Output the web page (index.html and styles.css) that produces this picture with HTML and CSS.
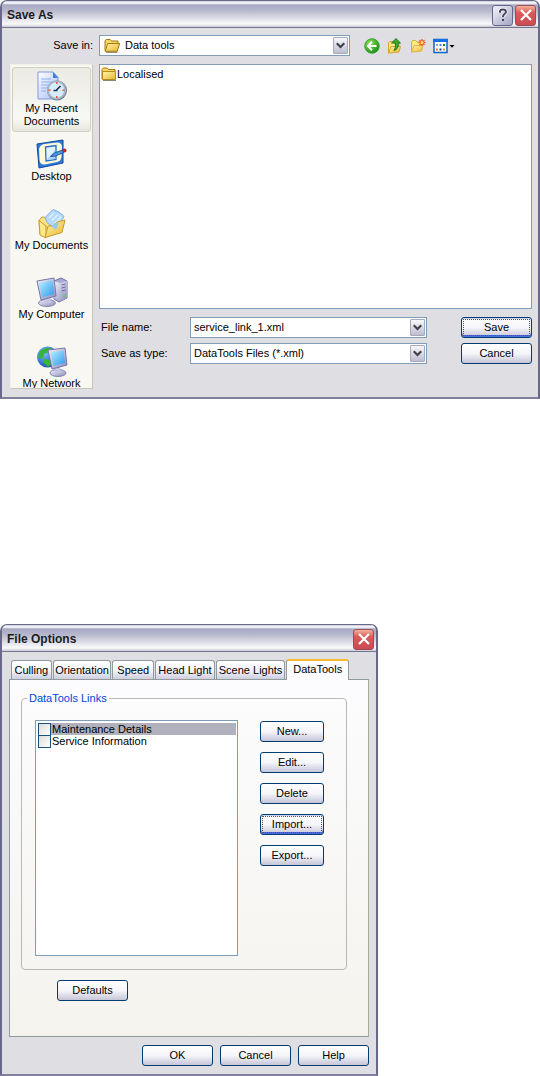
FILE: index.html
```html
<!DOCTYPE html>
<html lang="en">
<head>
    <meta charset="UTF-8">
    <meta name="viewport" content="width=device-width, initial-scale=1.0">
    <title>Data tools</title>
    <link rel="stylesheet" href="styles.css">
</head>
<body>
    <!-- shared icons -->
    <svg class="defs" aria-hidden="true">
        <defs>
            <linearGradient id="gold" x1="0" y1="0" x2="1" y2="1">
                <stop offset="0" stop-color="#fff6a8"/><stop offset="1" stop-color="#e9b52f"/>
            </linearGradient>
            <linearGradient id="sky" x1="0" y1="0" x2="1" y2="1">
                <stop offset="0" stop-color="#b9f0ff"/><stop offset="1" stop-color="#2d98ee"/>
            </linearGradient>
            <linearGradient id="paper" x1="0" y1="0" x2="1" y2="1">
                <stop offset="0" stop-color="#ffffff"/><stop offset="1" stop-color="#a9bdf5"/>
            </linearGradient>
            <linearGradient id="metal" x1="0" y1="0" x2="1" y2="1">
                <stop offset="0" stop-color="#f1f1fb"/><stop offset="1" stop-color="#8c8cbd"/>
            </linearGradient>
            <radialGradient id="green" cx="0.35" cy="0.3" r="0.8">
                <stop offset="0" stop-color="#8be05c"/><stop offset="1" stop-color="#148a10"/>
            </radialGradient>
            <radialGradient id="globe" cx="0.35" cy="0.3" r="0.8">
                <stop offset="0" stop-color="#7cc4ff"/><stop offset="1" stop-color="#1042ae"/>
            </radialGradient>
        </defs>
        <symbol id="chevron" viewBox="0 0 9 7">
            <path d="M0.7 1.2 4.5 5l3.8-3.8" fill="none" stroke="#3e4048" stroke-width="2.2"/>
        </symbol>
        <symbol id="cross" viewBox="0 0 12 12">
            <path d="M1 1l10 10M11 1L1 11" fill="none" stroke="#fff" stroke-width="2.2"/>
        </symbol>
    </svg>

    <div class="window save-window">
        <div class="titlebar">
            <h1>Save As</h1>
            <button class="title-btn help-btn" aria-label="Help">
                <svg width="12" height="14" viewBox="0 0 12 14"><path d="M3 4.8V3.2Q3.4 1.5 6 1.5T9 3.8Q9 5.3 7.4 6.2 6 7 6 9" fill="none" stroke="#fff" stroke-width="3.4"/><path d="M3 4.8V3.2Q3.4 1.5 6 1.5T9 3.8Q9 5.3 7.4 6.2 6 7 6 9" fill="none" stroke="#444460" stroke-width="2"/><path d="M5 11h2v2H5z" fill="#444460"/></svg>
            </button>
            <button class="title-btn close-btn" aria-label="Close"><svg width="12" height="12"><use href="#cross"/></svg></button>
        </div>

        <div class="save-body">
            <label class="look-label" for="look">Save in:</label>
            <div class="look-row">
                <div class="combo look-combo">
                    <svg class="folder-open" width="16" height="15" viewBox="0 0 16 15">
                        <path d="M1 12.5V3l1.2-1.5h4L7.5 3H14v2.5" fill="#f7d765" stroke="#a17a0c"/>
                        <path d="M1.2 13.3 3.7 5.5h12l-2.5 7.8z" fill="url(#gold)" stroke="#a17a0c"/>
                        <path d="M2 14.4h11.6" stroke="#8c856c"/>
                    </svg>
                    <select id="look"><option>Data tools</option></select>
                    <span class="arrow"><svg width="9" height="7"><use href="#chevron"/></svg></span>
                </div>
                <button class="tool" aria-label="Back">
                    <svg width="16" height="16" viewBox="0 0 16 16"><circle cx="8" cy="8" r="7.3" fill="url(#green)" stroke="#2a9a20" stroke-width="0.8"/><path d="M8 3.8 3.9 8 8 12.2M4.5 8h8" fill="none" stroke="#fff" stroke-width="2"/></svg>
                </button>
                <button class="tool" aria-label="Up one level">
                    <svg width="16" height="16" viewBox="0 0 16 16"><path d="M1.5 15V5l1-1.5h3L7 5h5v3" fill="#ffe984" stroke="#d5a42c"/><path d="M1.5 15.2 4 8.5h9.5L12 14z" fill="url(#gold)" stroke="#d5a42c"/><path d="M4.5 5 9 .6 13.500 5H11.200c.3 4-.8 6.500-4.300 7.500 1.600-2 1.600-4 1.400-7.500z" fill="#39ae2b" stroke="#176f13" stroke-width="0.9"/></svg>
                </button>
                <button class="tool" aria-label="New folder">
                    <svg width="16" height="16" viewBox="0 0 16 16"><path d="M1.500 14V4l1-1.500h3L7 4h5v8" fill="#ffe984" stroke="#d9ac3f"/><path d="M1.500 14.200 4 7.500h9L11.500 13z" fill="url(#gold)" stroke="#e0b347"/><path d="M12 1v7M8.500 4.500h7M9.500 2l5 5M14.500 2l-5 5" stroke="#f15a24" stroke-width="1.300"/><circle cx="12" cy="4.500" r="1.500" fill="#ffe27a"/></svg>
                </button>
                <button class="tool" aria-label="Views">
                    <svg width="22" height="16" viewBox="0 0 22 16"><path d="M1 1.500h13v13H1z" fill="#fff" stroke="#0a62d0" stroke-width="1.500"/><path d="M0 1h15v3H0z" fill="#1470e4"/><path d="M3 6h2v2H3z" fill="#9a9aca"/><path d="M6.500 6h2v2h-2z" fill="#3483de"/><path d="M10 6h2v2h-2z" fill="#128a20"/><path d="M3 10.500h2v2H3z" fill="#f0704c"/><path d="M6.500 10.500h2v2h-2z" fill="#133e9e"/><path d="M10 10.500h2v2h-2z" fill="#caa21a"/><path d="M16.500 7h5L19 9.800z" fill="#000"/></svg>
                </button>
            </div>

            <div class="places">
                <button class="place current">
                    <svg width="32" height="32" viewBox="0 0 32 32">
                        <path d="M2 2h15l5 5v22H2z" fill="url(#paper)" stroke="#8199dc"/>
                        <path d="M17 2v6h5z" fill="#3b82da"/>
                        <path d="M5 9h10M5 12h12M5 15h8M5 18h6M5 21h5" stroke="#8db1f0"/>
                        <circle cx="21" cy="20.500" r="10" fill="#6f7689"/>
                        <circle cx="20.500" cy="20" r="8.700" fill="#d7ecfa" stroke="#a3b4c8" stroke-width="2"/>
                        <path d="M20.500 20l4-4M17.500 20.500h4" stroke="#23354d" stroke-width="1.700"/>
                        <path d="M20 13h1.500M20 27h1.500M13.500 19.500v1.500M27.500 19.500v1.500" stroke="#f05a28" stroke-width="2"/>
                    </svg>
                    <span>My Recent Documents</span>
                </button>
                <button class="place">
                    <svg width="32" height="32" viewBox="0 0 32 32">
                        <path d="M1 6 27 2v23L3 30z" fill="#2b7bdc" stroke="#0d4a9c"/>
                        <path d="M3 11Q4 7 8 6L21 4.500Q26 4.500 26 9L25.500 19Q25 23 21 24L9 26.500Q4 27 3.500 22z" fill="#fff8d4"/>
                        <path d="M9.500 9 20 7.500v14L10 23z" fill="#e0f1ff" stroke="#2171cb" stroke-width="1.300"/>
                        <path d="M12 20l7-8v9l-8 1z" fill="#acd4fb"/>
                        <path d="M14.500 18.500l4-3.500 8-3 1 2.500-8 3.500z" fill="#4c9ae8" stroke="#174b93" stroke-width="0.900"/>
                        <circle cx="28.500" cy="12.500" r="2" fill="#b62b22"/>
                    </svg>
                    <span>Desktop</span>
                </button>
                <button class="place">
                    <svg width="32" height="32" viewBox="0 0 32 32">
                        <path d="M3 13.500 6 10l4 .500L13 15l14 1-15 13-8-2z" fill="#fbe282" stroke="#c99a2b"/>
                        <path d="M9 10.500 17 2.500q7 2 11 7l-8 13-9-7z" fill="#b5dafb" stroke="#7fb0e4"/>
                        <path d="M13 11l5-5M16 13.500l6-6M19 16.500l6-7" stroke="#e2f3ff" stroke-width="1.200"/>
                        <path d="M3 13.500 10 19v12l-6-3z" fill="#ffe78c" stroke="#c99a2b"/>
                        <path d="M9 30.500 12 19l6-.500 3-3.500 8-2-3 12.500z" fill="url(#gold)" stroke="#c99a2b"/>
                        <path d="M15 19l8-4-3 8z" fill="#8fcaf5"/>
                    </svg>
                    <span>My Documents</span>
                </button>
                <button class="place">
                    <svg width="32" height="32" viewBox="0 0 32 32">
                        <path d="M18 5 25 2l6 3v17l-8 4-5-3z" fill="#a7a7d2" stroke="#7070a8"/>
                        <path d="M18 5l6 2v18l-6-3zM24 7l7-2v17l-7 3z" fill="url(#metal)"/>
                        <path d="M25.500 9l4-1M25.500 12l4-1M25.500 15l4-1" stroke="#6b6ba4"/>
                        <path d="M27 19h2v2h-2z" fill="#50df3a"/>
                        <ellipse cx="11" cy="27" rx="8.500" ry="3.500" fill="url(#metal)" stroke="#8989b0"/>
                        <path d="M9 20h5l1 7H9z" fill="#c4c4e4"/>
                        <path d="M1 5 18 2l2 18-15 4z" fill="url(#metal)" stroke="#7777a7"/>
                        <path d="M3 7 16.500 4.500 18 18 6 21.500z" fill="url(#sky)"/>
                    </svg>
                    <span>My Computer</span>
                </button>
                <button class="place">
                    <svg width="32" height="32" viewBox="0 0 32 32">
                        <circle cx="11.500" cy="12" r="10.500" fill="url(#globe)"/>
                        <path d="M4 6q5-4 11-3l-2 4-5 2-1 4-4 1-1-3zM8 14l6 1 2 4-4 3-4-4z" fill="#35b638"/>
                        <ellipse cx="22" cy="28" rx="8" ry="3.500" fill="url(#metal)" stroke="#8989b0"/>
                        <path d="M19 22h5l1 6h-6z" fill="#c4c4e4"/>
                        <path d="M12 5 29 3l2 17-15 4z" fill="url(#metal)" stroke="#7777a7"/>
                        <path d="M14.500 7.500 27.500 5.500 29 18l-11.500 3z" fill="url(#sky)"/>
                    </svg>
                    <span>My Network</span>
                </button>
            </div>

            <ul class="files">
                <li>
                    <svg width="16" height="14" viewBox="0 0 16 14">
                        <path d="M1 12V2.500L2.200 1h4l1.300 1.500H14V12z" fill="#f7d765" stroke="#a17a0c"/>
                        <path d="M1.500 12.500v-8h13v8z" fill="url(#gold)" stroke="#b38a1b"/>
                        <path d="M2 13.500h13" stroke="#8c856c"/>
                    </svg>
                    <span>Localised</span>
                </li>
            </ul>

            <form class="save-form">
                <label for="fname">File name:</label>
                <div class="combo">
                    <input id="fname" type="text" value="service_link_1.xml">
                    <span class="arrow"><svg width="9" height="7"><use href="#chevron"/></svg></span>
                </div>
                <button type="button" class="btn focused">Save</button>
                <label for="ftype">Save as type:</label>
                <div class="combo">
                    <select id="ftype"><option>DataTools Files (*.xml)</option></select>
                    <span class="arrow"><svg width="9" height="7"><use href="#chevron"/></svg></span>
                </div>
                <button type="button" class="btn">Cancel</button>
            </form>
        </div>
    </div>

    <div class="window options-window">
        <div class="titlebar">
            <h1>File Options</h1>
            <button class="title-btn close-btn" aria-label="Close"><svg width="12" height="12"><use href="#cross"/></svg></button>
        </div>

        <div class="options-body">
            <div class="tabs" role="tablist">
                <button class="tab" role="tab">Culling</button>
                <button class="tab" role="tab">Orientation</button>
                <button class="tab" role="tab">Speed</button>
                <button class="tab" role="tab">Head Light</button>
                <button class="tab" role="tab">Scene Lights</button>
                <button class="tab active" role="tab" aria-selected="true">DataTools</button>
            </div>
            <div class="panel" role="tabpanel">
                <fieldset>
                    <legend>DataTools Links</legend>
                    <div class="links">
                        <ul class="link-list">
                            <li class="selected"><input type="checkbox" id="maint"><label for="maint">Maintenance Details</label></li>
                            <li><input type="checkbox" id="serv"><label for="serv">Service Information</label></li>
                        </ul>
                        <div class="link-actions">
                            <button class="btn">New...</button>
                            <button class="btn">Edit...</button>
                            <button class="btn">Delete</button>
                            <button class="btn focused">Import...</button>
                            <button class="btn">Export...</button>
                        </div>
                    </div>
                </fieldset>
                <button class="btn defaults">Defaults</button>
            </div>
            <div class="footer">
                <button class="btn">OK</button>
                <button class="btn">Cancel</button>
                <button class="btn">Help</button>
            </div>
        </div>
    </div>
</body>
</html>
```
FILE: styles.css
```css
*{
    box-sizing: border-box;
}
body{
    margin: 0;
    background-color: #fff;
    color: #000;
    font-family: "Liberation Sans", Arial, sans-serif;
    font-size: 11px;
    line-height: 13px;
}
button, input, select{
    font: inherit;
    color: inherit;
    margin: 0;
    padding: 0;
}
ul{
    list-style: none;
    margin: 0;
    padding: 0;
}
svg{
    display: block;
    flex: none;
}
.defs{
    position: absolute;
    width: 0;
    height: 0;
}

/* window frame */
.window{
    background-color: #dfdee3;
    border: 2px solid #69688a;
    border-top: 1px solid #69688a;
    border-bottom-color: #807f9c;
    border-radius: 7px 7px 0 0;
    overflow: hidden;
}
.save-window{
    margin-bottom: 225px;
}
.options-window{
    width: 70%;
}
.titlebar{
    display: flex;
    align-items: center;
    gap: 2px;
    height: 27px;
    padding: 2px 2px 0 5px;
    border-bottom: 1px solid #76758f;
    background: linear-gradient(#c8c8d8 0, #fff 2px, #a9a9c3 4px, #b5b5cb 9px, #dcdce6 17px, #fafafc 23px, #c9c9d5 26px);
}
.titlebar h1{
    flex: 1;
    margin: 0;
    color: #1c1c20;
    font-size: 12px;
    line-height: 16px;
    font-weight: bold;
}
.title-btn{
    display: flex;
    align-items: center;
    justify-content: center;
    width: 21px;
    height: 21px;
    border: 1px solid #66668c;
    border-radius: 3px;
    background: linear-gradient(135deg, #f4f4fa, #a3a3c2);
}
.close-btn{
    border-color: #a04a55;
    background: linear-gradient(#f0b39b, #dc5a58 35%, #c94b52);
}

/* buttons */
.btn{
    height: 21px;
    border: 1px solid #003c74;
    border-radius: 3px;
    background: linear-gradient(#fff, #f5f5fa 50%, #c6c5d7);
    text-align: center;
}
.focused{
    box-shadow: inset 0 -2px #4a70dc, inset 0 1px #c3d3f5;
    outline: 1px dotted #555;
    outline-offset: -3px;
}

/* drop-downs */
.combo{
    display: flex;
    align-items: center;
    height: 21px;
    padding: 1px;
    border: 1px solid #7f9db9;
    background-color: #fff;
}
.combo select,
.combo input{
    flex: 1;
    min-width: 0;
    padding-left: 2px;
    border: 0;
    outline: 0;
    background: none;
    appearance: none;
}
.arrow{
    display: flex;
    align-items: center;
    justify-content: center;
    width: 15px;
    height: 17px;
    border: 1px solid #a9a9bb;
    border-radius: 1px;
    background: linear-gradient(#f7f7fb, #bebdd0);
}

/* save as */
.save-body{
    display: grid;
    grid-template-columns: 83px 1fr;
    grid-template-rows: auto auto 1fr;
    column-gap: 6px;
    padding: 7px 6px 8px 8px;
}
.look-label{
    align-self: center;
    margin-bottom: 8px;
    text-align: right;
}
.look-row{
    display: flex;
    align-items: center;
    gap: 7px;
    margin-bottom: 8px;
}
.look-combo{
    width: 58%;
    margin-right: 7px;
    padding-left: 4px;
}
.look-combo select{
    padding-left: 5px;
}
.tool{
    border: 0;
    background: none;
}
.places{
    grid-row: 2 / span 2;
    grid-column: 1;
    height: 325px;
    padding: 2px 1px 0;
    border: 1px solid #fff;
    border-color: #f1f0e4 #c8c5b2 #c8c5b2 #f1f0e4;
    background-color: #f8f7f2;
    overflow: hidden;
}
.place{
    display: flex;
    flex-direction: column;
    align-items: center;
    width: 100%;
    height: 69px;
    padding: 3px 0 0;
    border: 0;
    background: none;
    white-space: nowrap;
}
.place.current{
    height: 65px;
    margin-bottom: 3px;
    padding: 2px 8px 0;
    border: 1px solid #d2d0c4;
    border-radius: 3px;
    background: linear-gradient(#ebeae3, #f8f8f5 80%, #e7e6dd);
    white-space: normal;
}
.files{
    height: 245px;
    padding: 2px 1px;
    border: 1px solid #7f9db9;
    background-color: #fff;
}
.files li{
    display: flex;
    align-items: center;
}
.save-form{
    display: grid;
    grid-template-columns: 91px 1fr 71px;
    row-gap: 5px;
    align-items: center;
    align-content: start;
    padding-top: 8px;
}
.save-form label{
    padding-left: 2px;
}
.save-form .combo{
    margin-right: 34px;
}

/* file options */
.options-body{
    padding: 7px 7px 8px;
}
.tabs{
    display: grid;
    grid-template-columns: 41fr 59fr 42fr 60fr 70fr 63fr;
    column-gap: 1px;
    align-items: end;
    padding: 0 20px 0 2px;
}
.tab{
    height: 19px;
    border: 1px solid #919b9c;
    border-bottom: 0;
    border-radius: 3px 3px 0 0;
    background: linear-gradient(#fff, #f5f5fa 50%, #cfcee0);
    white-space: nowrap;
}
.tab.active{
    height: 21px;
    border-top: 2px solid #f9b92f;
    background: #fcfcfe;
    margin-bottom: -1px;
    padding-bottom: 3px;
    z-index: 1;
}
.panel{
    padding: 12px 21px 35px 11px;
    border: 1px solid #919b9c;
    border-right-color: #aaa99c;
    background: linear-gradient(#fcfcfe, #f4f3ee);
}
fieldset{
    min-width: 0;
    margin: 0;
    padding: 15px 22px 13px 13px;
    border: 1px solid #b9b8b4;
    border-radius: 4px;
}
legend{
    margin-left: -8px;
    padding: 0 2px;
    color: #0046d5;
}
.links{
    display: flex;
    gap: 22px;
}
.link-list{
    flex: 1;
    height: 236px;
    padding: 2px 1px;
    border: 1px solid #7f9db9;
    background-color: #fff;
}
.link-list li{
    display: flex;
    align-items: center;
    height: 12px;
    margin-left: 1px;
}
.link-list label{
    flex: 1;
    height: 12px;
    line-height: 12px;
    padding-left: 1px;
}
.link-list .selected label{
    background-color: #b1b1bd;
}
.link-list input{
    appearance: none;
    width: 13px;
    height: 13px;
    border: 1px solid #1c5180;
    background: linear-gradient(135deg, #dcdcd7, #fff);
}
.link-actions{
    display: flex;
    flex-direction: column;
    gap: 10px;
    width: 64px;
    padding-top: 1px;
}
.defaults{
    display: block;
    width: 71px;
    margin: 10px 0 0 36px;
}
.footer{
    display: flex;
    justify-content: flex-end;
    gap: 7px;
    padding-top: 8px;
}
.footer .btn{
    width: 71px;
}
```
